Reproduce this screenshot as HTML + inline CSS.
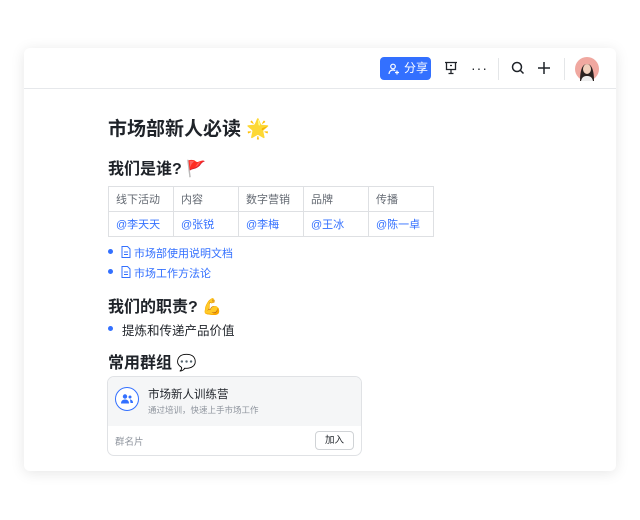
<!DOCTYPE html><html><head><meta charset="utf-8"><style>
body{margin:0;width:640px;height:520px;background:#fff;font-family:"Liberation Sans","Noto Sans CJK SC",sans-serif;position:relative;overflow:hidden}
.card{position:absolute;left:24px;top:48px;width:592px;height:423px;background:#fff;border-radius:6px;box-shadow:0 2px 14px rgba(0,0,0,.10)}
.hdr{position:absolute;left:0;top:0;width:592px;height:40px;border-bottom:1px solid #e6e8eb}
.a{position:absolute;white-space:nowrap}
.share{left:356px;top:9px;width:51px;height:23px;background:#3370ff;border-radius:4px;color:#fff;font-size:12px;line-height:23px}
.sep{position:absolute;top:10px;width:1px;height:22px;background:#e4e6e8}
h{position:absolute;font-weight:600;color:#1f2329;white-space:nowrap}
table{position:absolute;left:84px;top:138px;border-collapse:collapse;font-size:11px}
td{border:1px solid #dee0e3;width:65px;height:25px;padding:0 0 0 7px;color:#646a73;box-sizing:border-box}
tr+tr td{color:#3370ff}
.dot{position:absolute;width:5px;height:5px;border-radius:50%;background:#3370ff}
.lnk{color:#3370ff;font-size:11px}
</style></head><body>
<div class="card">
<div class="hdr">
<div class="a share"><svg style="position:absolute;left:8px;top:6px" width="12" height="12" viewBox="0 0 12 12" fill="none" stroke="#fff" stroke-width="1.2"><circle cx="5" cy="3.5" r="2.3"/><path d="M1 11c0-2.5 1.8-4 4-4 1 0 1.6.2 2.2.6M9 7.5v4M7 9.5h4"/></svg><span style="position:absolute;left:24px">分享</span></div>
<svg class="a" style="left:420px;top:13px" width="14" height="14" viewBox="0 0 14 14" fill="none" stroke="#1f2329" stroke-width="1.3"><path d="M1 1.5h12M2.5 1.5v7h9v-7M7 8.5v4M4.5 12.5h5M6 4.5h2"/></svg>
<div class="a" style="left:447px;top:12px;font-size:14px;color:#1f2329;letter-spacing:1px">···</div>
<div class="sep" style="left:474px"></div>
<svg class="a" style="left:487px;top:13px" width="14" height="14" viewBox="0 0 14 14" fill="none" stroke="#1f2329" stroke-width="1.5"><circle cx="6" cy="6" r="4.5"/><path d="M9.5 9.5l3 3"/></svg>
<svg class="a" style="left:513px;top:13px" width="14" height="14" viewBox="0 0 14 14" stroke="#1f2329" stroke-width="1.5"><path d="M7 1v12M1 7h12"/></svg>
<div class="sep" style="left:540px"></div>
<svg class="a" style="left:551px;top:9px" width="24" height="24" viewBox="0 0 24 24"><circle cx="12" cy="12" r="12" fill="#f0a8a0"/><path d="M5 24c0-10 2-17 7-17s7 7 7 17z" fill="#2b2220"/><ellipse cx="12" cy="12" rx="4" ry="5" fill="#f1d0bd"/><path d="M6 24c1-4 3-5 6-5s5 1 6 5z" fill="#eee"/></svg>
</div>
<h style="left:84px;top:66px;font-size:19px">市场部新人必读 <span style="color:#f5c842">🌟</span></h>
<h style="left:84px;top:107px;font-size:16px">我们是谁? <span style="color:#d22">🚩</span></h>
<table><tr><td>线下活动</td><td>内容</td><td>数字营销</td><td>品牌</td><td>传播</td></tr><tr><td>@李天天</td><td>@张锐</td><td>@李梅</td><td>@王冰</td><td>@陈一卓</td></tr></table>
<div class="dot" style="left:84px;top:201px"></div>
<svg class="a" style="left:97px;top:198px" width="10" height="12" viewBox="0 0 10 12" fill="none" stroke="#3370ff"><path d="M1 .5h5.5l2.5 2.5v8.5H1z"/><path d="M3 6h4M3 8.5h4"/></svg>
<div class="a lnk" style="left:110px;top:197px">市场部使用说明文档</div>
<div class="dot" style="left:84px;top:221px"></div>
<svg class="a" style="left:97px;top:218px" width="10" height="12" viewBox="0 0 10 12" fill="none" stroke="#3370ff"><path d="M1 .5h5.5l2.5 2.5v8.5H1z"/><path d="M3 6h4M3 8.5h4"/></svg>
<div class="a lnk" style="left:110px;top:217px">市场工作方法论</div>
<h style="left:84px;top:245px;font-size:16px">我们的职责? 💪</h>
<div class="dot" style="left:84px;top:278px"></div>
<div class="a" style="left:98px;top:272px;font-size:12.5px;color:#1f2329">提炼和传递产品价值</div>
<h style="left:84px;top:301px;font-size:16px">常用群组 <span style="font-weight:normal">💬</span></h>
<div class="a" style="left:83px;top:328px;width:253px;height:78px;border:1px solid #e0e2e5;border-radius:7px;overflow:hidden;background:#fff">
<div style="position:absolute;left:0;top:0;width:253px;height:49px;background:#f5f6f7"></div>
<div style="position:absolute;left:7px;top:10px;width:22px;height:22px;border:1.5px solid #3370ff;border-radius:50%;background:#fff"></div>
<svg style="position:absolute;left:13px;top:17px" width="12" height="10" viewBox="0 0 12 10" fill="#3370ff"><circle cx="4" cy="2.5" r="2.2"/><path d="M0 9.5c0-3 2-4 4-4s4 1 4 4z"/><circle cx="9" cy="3" r="1.5"/><path d="M9 5.5c1.5 0 3 1 3 3.5H9.5z"/></svg>
<div style="position:absolute;left:40px;top:9px;font-size:11.5px;color:#1f2329">市场新人训练营</div>
<div style="position:absolute;left:40px;top:27px;font-size:8.5px;color:#8f959e">通过培训，快速上手市场工作</div>
<div style="position:absolute;left:7px;top:57px;font-size:9.5px;color:#8f959e">群名片</div>
<div style="position:absolute;left:207px;top:54px;width:37px;height:17px;border:1px solid #d0d3d6;border-radius:4px;font-size:9.5px;line-height:17px;text-align:center;color:#1f2329">加入</div>
</div>
</div>
</body></html>
